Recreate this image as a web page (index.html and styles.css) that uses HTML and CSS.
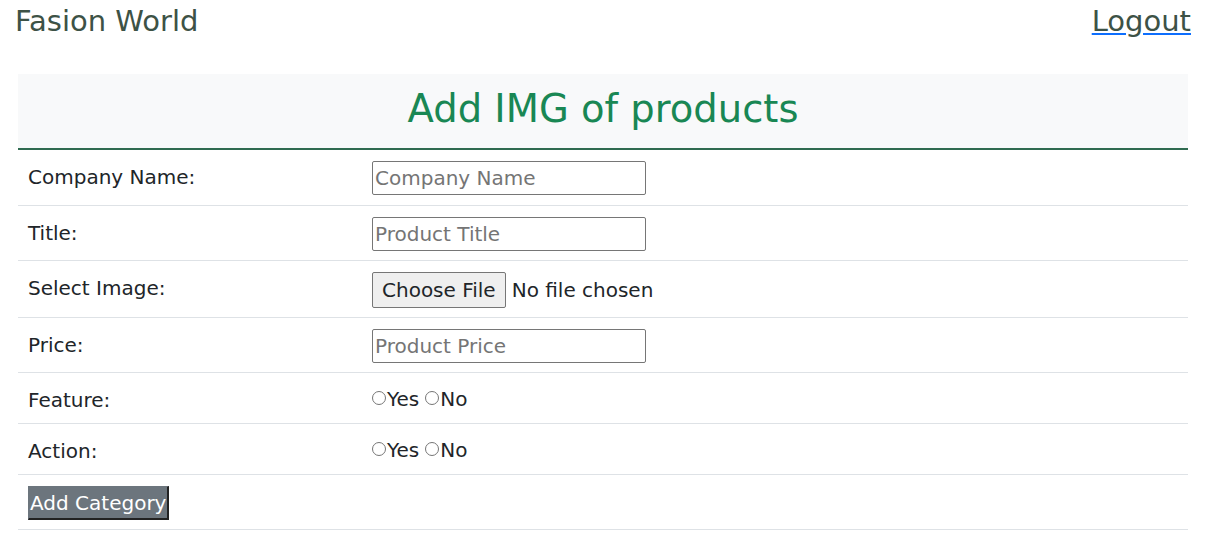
FILE: index.html
```html
<!DOCTYPE html>
<html>
<head>
<meta charset="utf-8">
<link rel="stylesheet" href="styles.css">
</head>
<body>
<header class="topbar">
  <span class="brand">Fasion World</span>
  <a class="logout" href="#">Logout</a>
</header>
<main class="wrap">
  <form class="form">
    <div class="head">Add IMG of products</div>
    <div class="row h56"><label class="lbl">Company Name:</label><div class="ctl"><input class="txt" placeholder="Company Name"></div></div>
    <div class="row h55"><label class="lbl">Title:</label><div class="ctl"><input class="txt" placeholder="Product Title"></div></div>
    <div class="row h57"><label class="lbl">Select Image:</label><div class="ctl file"><span class="filebtn">Choose File</span><span class="nofile">No file chosen</span></div></div>
    <div class="row h55"><label class="lbl">Price:</label><div class="ctl"><input class="txt" placeholder="Product Price"></div></div>
    <div class="row h51"><label class="lbl">Feature:</label><div class="ctl radios"><span class="radio"></span>Yes<span class="gap"></span><span class="radio"></span>No</div></div>
    <div class="row h51"><label class="lbl">Action:</label><div class="ctl radios"><span class="radio"></span>Yes<span class="gap"></span><span class="radio"></span>No</div></div>
    <div class="row h55"><button type="button" class="submit">Add Category</button></div>
  </form>
</main>
</body>
</html>
```
FILE: styles.css
```css
* { box-sizing: border-box; }
body {
  margin: 0;
  font-family: "DejaVu Sans", Verdana, sans-serif;
  color: #212529;
  background: #fff;
}
.topbar {
  display: flex;
  justify-content: space-between;
  align-items: flex-start;
  padding: 3px 20px 0 15px;
  height: 74px;
}
.brand {
  font-size: 29px;
  color: #3d5246;
  line-height: 36px;
}
.logout {
  font-size: 29px;
  color: #3d5246;
  line-height: 36px;
  text-decoration: underline;
  text-decoration-color: #0d6efd;
}
.wrap { padding: 0 23px 0 18px; }
.form { display: flex; flex-direction: column; }
.head {
  background: #f8f9fa;
  color: #198754;
  font-size: 38.5px;
  text-align: center;
  height: 76px;
  padding-top: 2px;
  line-height: 66px;
  border-bottom: 2px solid #2f6b50;
}
.row {
  display: flex;
  align-items: flex-start;
  padding: 11px 10px 0;
  border-bottom: 1px solid #dee2e6;
}
.h56 { height: 56px; }
.h55 { height: 55px; }
.h57 { height: 57px; }
.h51 { height: 51px; }
.lbl {
  width: 344px;
  font-size: 20px;
  line-height: 33px;
}
.ctl { display: flex; align-items: center; }
.txt {
  width: 274px;
  height: 34px;
  border: 1px solid #767676;
  border-radius: 2px;
  font-family: inherit;
  font-size: 20px;
  padding: 0 2px;
  color: #212529;
}
.txt::placeholder { color: #757575; }
.file { font-size: 20px; }
.filebtn {
  display: inline-block;
  height: 36px;
  line-height: 34px;
  padding: 0 9px;
  background: #efefef;
  border: 1px solid #767676;
  border-radius: 2px;
  margin-right: 6px;
}
.radios { font-size: 20px; line-height: 30px; }
.radio {
  display: inline-block;
  width: 14px;
  height: 14px;
  border: 1px solid #767676;
  border-radius: 50%;
  margin-right: 1px;
  margin-top: -3px;
}
.gap { display: inline-block; width: 6px; }
.submit {
  font-family: inherit;
  font-size: 20px;
  color: #fff;
  background: #6c757d;
  border: 1px solid #6c757d;
  border-right: 2px solid #222;
  border-bottom: 2px solid #222;
  height: 34px;
  padding: 0 1px;
  line-height: 30px;
}
```
